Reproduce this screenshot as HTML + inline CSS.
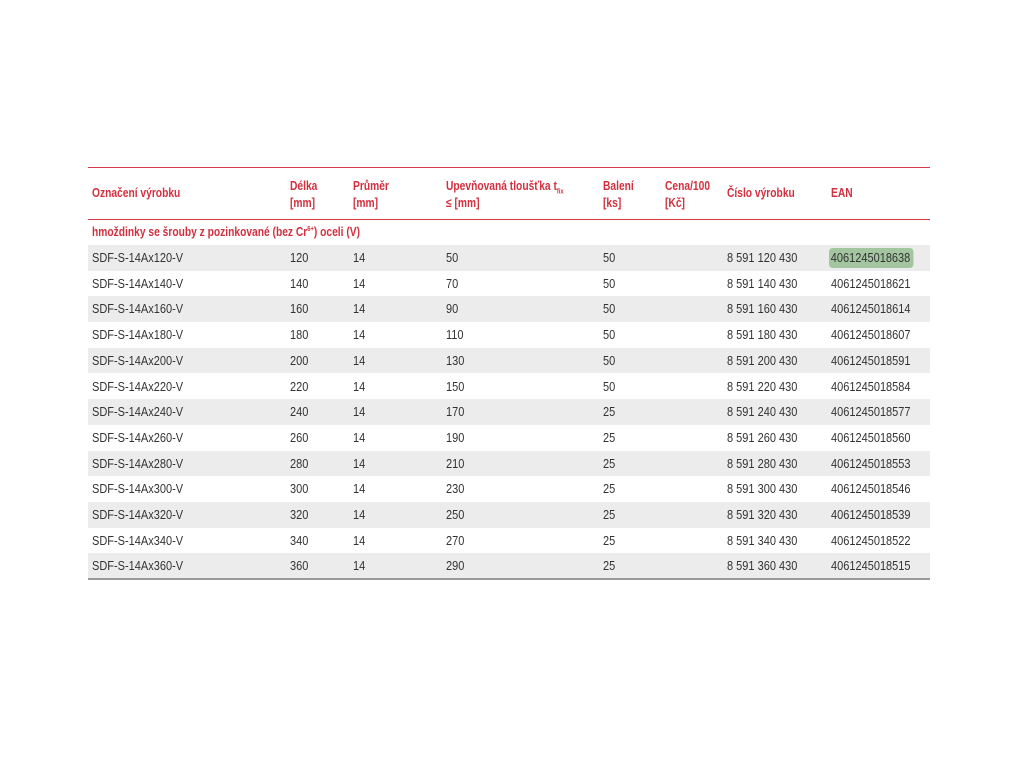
<!DOCTYPE html>
<html><head><meta charset="utf-8"><style>
body{margin:0;width:1024px;height:768px;background:#fff;position:relative;overflow:hidden;font-family:"Liberation Sans",sans-serif;font-size:12.5px;color:#333}
.t,.c{position:absolute;white-space:nowrap;transform:scaleX(0.88);transform-origin:0 0}
.r{color:#d2303f;font-weight:bold;transform:scaleX(0.82)}
.row{position:absolute;left:88px;width:842px;height:25.7px}
.g{background:#ececec}
.c{top:6px}
.hl{position:absolute;left:88px;width:842px;height:1px;background:#d83a48}
sub,sup{line-height:0}
</style></head><body>
<div class="hl" style="top:167px"></div>
<div class="hl" style="top:219px"></div>
<div class="t r" style="left:92px;top:186px">Označení výrobku</div>
<div class="t r" style="left:290px;top:178px;line-height:17px">Délka<br>[mm]</div>
<div class="t r" style="left:353px;top:178px;line-height:17px">Průměr<br>[mm]</div>
<div class="t r" style="left:446px;top:178px;line-height:17px">Upevňovaná tloušťka t<sub style="font-size:7px">fix</sub><br>≤ [mm]</div>
<div class="t r" style="left:603px;top:178px;line-height:17px">Balení<br>[ks]</div>
<div class="t r" style="left:665px;top:178px;line-height:17px">Cena/100<br>[Kč]</div>
<div class="t r" style="left:727px;top:186px">Číslo výrobku</div>
<div class="t r" style="left:831px;top:186px">EAN</div>
<div class="t r" style="left:92px;top:225px">hmoždinky se šrouby z pozinkované (bez Cr<sup style="font-size:7px">6+</sup>) oceli (V)</div>
<div id="rows"></div>
<div style="position:absolute;left:88px;top:578px;width:842px;height:2px;background:#999"></div>
<script>
var d=[[120,50,50,"8 591 120 430","4061245018638"],[140,70,50,"8 591 140 430","4061245018621"],[160,90,50,"8 591 160 430","4061245018614"],[180,110,50,"8 591 180 430","4061245018607"],[200,130,50,"8 591 200 430","4061245018591"],[220,150,50,"8 591 220 430","4061245018584"],[240,170,25,"8 591 240 430","4061245018577"],[260,190,25,"8 591 260 430","4061245018560"],[280,210,25,"8 591 280 430","4061245018553"],[300,230,25,"8 591 300 430","4061245018546"],[320,250,25,"8 591 320 430","4061245018539"],[340,270,25,"8 591 340 430","4061245018522"],[360,290,25,"8 591 360 430","4061245018515"]];
var h="";d.forEach(function(r,i){var top=245+i*25.7;
h+='<div class="row'+(i%2==0?' g':'')+'" style="top:'+top+'px">'+
'<span class="c" style="left:4px">SDF-S-14Ax'+r[0]+'-V</span>'+
'<span class="c" style="left:202px">'+r[0]+'</span>'+
'<span class="c" style="left:265px">14</span>'+
'<span class="c" style="left:358px">'+r[1]+'</span>'+
'<span class="c" style="left:515px">'+r[2]+'</span>'+
'<span class="c" style="left:639px">'+r[3]+'</span>'+
(i==0?'<span class="c" style="left:741px;top:3px;padding:3px 4px 3px 2px;background:#a3c6a0;border-radius:4px">'+r[4]+'</span>':'<span class="c" style="left:743px">'+r[4]+'</span>')+
'</div>';});
document.getElementById("rows").innerHTML=h;
</script>
</body></html>
